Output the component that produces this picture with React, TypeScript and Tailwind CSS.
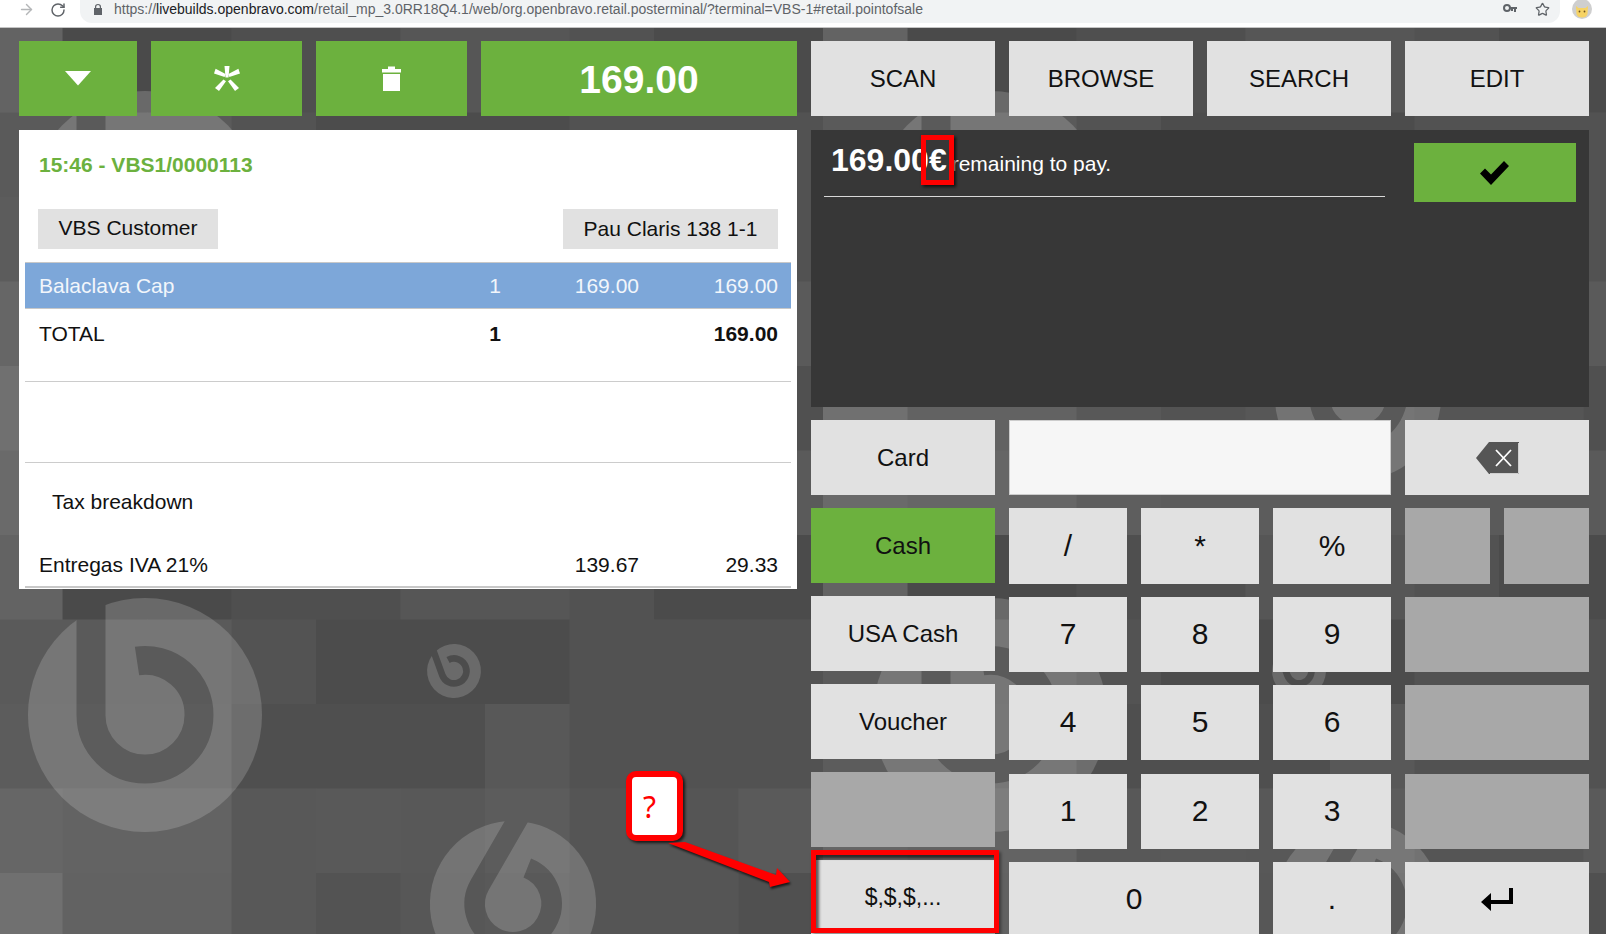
import type { ReactNode } from "react";
import { ArrowRight, RotateCw, Star } from "lucide-react";

const TILES = [
  ["#636363", "#4a4a4a", "#4a4a4a", "#4f4f4f", "#4f4f4f", "#565656", "#565656", "#525252", "#4b4b4b", "#4b4b4b"],
  ["#5a5a5a", "#5a5a5a", "#5a5a5a", "#535353", "#4c4c4c", "#4c4c4c", "#4c4c4c", "#525252", "#525252", "#525252"],
  ["#5c5c5c", "#5c5c5c", "#5c5c5c", "#4f4f4f", "#4f4f4f", "#4f4f4f", "#585858", "#525252", "#525252", "#525252"],
  ["#666666", "#636363", "#636363", "#585858", "#595959", "#585858", "#5c5c5c", "#555555", "#555555", "#5a5a5a"],
  ["#707070", "#626262", "#626262", "#585858", "#535353", "#575757", "#595959", "#555555", "#555555", "#505050"],
  ["#6a6a6a", "#666666", "#666666", "#5e5e5e", "#5c5c5c", "#5c5c5c", "#5a5a5a", "#5a5a5a", "#5a5a5a", "#5a5a5a"],
];

function Background() {
  return (
    <svg className="absolute left-0 top-0" width="1606" height="906">
      <defs>
        <mask id="logoMask" maskUnits="userSpaceOnUse" x="-130" y="-130" width="260" height="260">
          <rect x="-130" y="-130" width="260" height="260" fill="#fff" />
          <path
            d="M-54 -130 L-54 0 A54 54 0 0 0 54 0 A54 54 0 0 0 -8 -54"
            fill="none"
            stroke="#000"
            strokeWidth="29"
          />
        </mask>
        <g id="logo">
          <circle r="117" fill="#fff" fillOpacity="0.17" mask="url(#logoMask)" />
        </g>
        <pattern id="tiles" x="-22" y="0" width="845" height="507" patternUnits="userSpaceOnUse">
          {TILES.map((row, r) =>
            row.map((c, i) => (
              <rect key={`${r}-${i}`} x={i * 84.5} y={r * 84.5} width="85" height="85" fill={c} />
            ))
          )}
          <use href="#logo" transform="translate(167 180)" />
          <use href="#logo" transform="translate(476 136) rotate(-20) scale(0.23)" />
          <use href="#logo" transform="translate(535 369) rotate(30) scale(0.71)" />
        </pattern>
      </defs>
      <rect width="1606" height="906" fill="url(#tiles)" />
    </svg>
  );
}

function ChromeBar() {
  return (
    <div className="h-[28px] bg-white border-b border-[#c4c4c4] flex items-start overflow-hidden">
      <div className="w-[80px] h-[19px] flex items-center shrink-0">
        <ArrowRight className="ml-[18px] text-[#b4b6b8]" size={17} strokeWidth={2} />
        <RotateCw className="ml-[15px] text-[#5f6368]" size={16} strokeWidth={2.2} />
      </div>
      <div className="w-[1480px] h-[23px] bg-[#f1f3f4] rounded-br-[12px] rounded-bl-[12px] flex items-center pb-[5px] pl-[14px] text-[14px] text-[#5f6368] whitespace-nowrap">
        <svg className="mr-[12px]" width="8" height="11" viewBox="0 0 8 11" fill="#5f6368">
          <path d="M1 4V2.800a3 2.800 0 0 1 6 0V4h1v7H0V4zm1.200 0h3.600V2.800a1.800 1.700 0 0 0-3.600 0z" />
        </svg>
        <span>
          https://<span className="text-[#202124]">livebuilds.openbravo.com</span>
          /retail_mp_3.0RR18Q4.1/web/org.openbravo.retail.posterminal/?terminal=VBS-1#retail.pointofsale
        </span>
        <div className="ml-auto flex items-center mr-[10px] gap-[18px]">
          <svg width="14" height="10" viewBox="0 0 14 10" fill="#5f6368">
            <circle cx="4" cy="4" r="3" fill="none" stroke="#5f6368" strokeWidth="2" />
            <path d="M7 3h7v2h-1v3h-2V5h-1v2H8V5H7z" />
          </svg>
          <Star className="text-[#5f6368]" size={15} strokeWidth={2} />
        </div>
      </div>
      <svg className="ml-[12px] shrink-0 -mt-[1px]" width="20" height="20" viewBox="0 0 20 20">
        <circle cx="10" cy="10" r="10" fill="#cfcfcf" />
        <path d="M4 7l2.500 2h7L16 7l-.5 8q-1 3.500-5.500 3.500T4.500 15z" fill="#f6d365" />
        <circle cx="7.500" cy="12.500" r="0.900" fill="#6b4f1d" />
        <circle cx="12.500" cy="12.500" r="0.900" fill="#6b4f1d" />
      </svg>
    </div>
  );
}

function Key({ children, className = "" }: { children?: ReactNode; className?: string }) {
  return (
    <div className={`flex items-center justify-center bg-[#e1e1e1] text-[#111] ${className}`}>{children}</div>
  );
}

function TopLeft() {
  return (
    <div className="flex gap-[14px] h-[75px]">
      <div className="w-[118px] bg-[#6cb13e] flex items-center justify-center">
        <svg width="26" height="15" viewBox="0 0 26 15">
          <polygon points="0,0 26,0 13,14.500" fill="#fff" />
        </svg>
      </div>
      <div className="w-[151px] bg-[#6cb13e] flex items-center justify-center">
        <svg width="26" height="25" viewBox="0 0 26 25" fill="#fff">
          <path d="M10.500 0h5l-1 11.500h-3z" />
          <path d="M0 7.500l1.600-4.700 10 5.200-1 3z" />
          <path d="M26 7.500l-1.600-4.700-10 5.200 1 3z" />
          <path d="M5 25l-4-3 8.500-8.500 2.500 1.800z" />
          <path d="M21 25l4-3-8.500-8.500-2.500 1.800z" />
        </svg>
      </div>
      <div className="w-[151px] bg-[#6cb13e] flex items-center justify-center">
        <svg width="19" height="25" viewBox="0 0 19 25" fill="#fff">
          <path d="M0 3h6V0.500h7V3h6v3.500H0z" />
          <path d="M1 8h17v17H1z" />
        </svg>
      </div>
      <div className="flex-1 bg-[#6cb13e] flex items-center justify-center pt-[3px] text-white font-bold text-[39px]">
        169.00
      </div>
    </div>
  );
}

function ReceiptRow({
  a,
  b,
  c,
  d,
  className = "",
  bold = false,
}: {
  a: string;
  b?: string;
  c?: string;
  d: string;
  className?: string;
  bold?: boolean;
}) {
  return (
    <div className={`flex items-center pl-[14px] pr-[13px] text-[21px] ${className}`}>
      <span className="w-[425px]">{a}</span>
      <span className={`w-[62px] text-center ${bold ? "font-bold" : ""}`}>{b}</span>
      <span className="w-[113px] text-right">{c}</span>
      <span className={`flex-1 text-right ${bold ? "font-bold" : ""}`}>{d}</span>
    </div>
  );
}

function Receipt() {
  return (
    <div className="mt-[14px] h-[459px] bg-white px-[6px] text-[#111]">
      <div className="h-[79px] pl-[14px] pt-[23px] text-[#6cb13e] font-bold text-[21px] leading-[24px]">
        15:46 - VBS1/0000113
      </div>
      <div className="flex justify-between h-[40px] pl-[13px] pr-[13px] text-[21px]">
        <div className="w-[180px] bg-[#e1e1e1] flex items-center justify-center pb-[2px]">VBS Customer</div>
        <div className="w-[215px] bg-[#e1e1e1] flex items-center justify-center">Pau Claris 138 1-1</div>
      </div>
      <div className="mt-[13px] h-[47px] border-y border-[#c8c8c8] bg-[#7da7d9]">
        <ReceiptRow a="Balaclava Cap" b="1" c="169.00" d="169.00" className="h-full text-[#f2f6fb]" />
      </div>
      <ReceiptRow a="TOTAL" b="1" d="169.00" bold className="h-[50px]" />
      <div className="mt-[22px] h-[81px] border-t border-[#cccccc]" />
      <div className="h-[79px] border-t border-[#cccccc] pl-[27px] flex items-center text-[21px]">Tax breakdown</div>
      <ReceiptRow a="Entregas IVA 21%" c="139.67" d="29.33" className="h-[45px] pt-[2px]" />
      <div className="h-[2px] bg-[#c8c8c8]" />
    </div>
  );
}

function TopRight() {
  return (
    <div className="grid grid-cols-4 gap-[14px] h-[75px]">
      <Key className="text-[24px]">SCAN</Key>
      <Key className="text-[24px]">BROWSE</Key>
      <Key className="text-[24px]">SEARCH</Key>
      <Key className="text-[24px]">EDIT</Key>
    </div>
  );
}

function PayPanel() {
  return (
    <div className="mt-[14px] h-[277px] bg-[#373737] flex items-start pt-[13px] pl-[13px] pr-[13px] text-white">
      <div className="w-[561px] h-[54px] border-b border-[#d8d8d8] pl-[7px] pt-[2px] whitespace-nowrap leading-[30px]">
        <span className="font-bold text-[32px]">169.00€</span>
        <span className="text-[21px] ml-[5px]">remaining to pay.</span>
      </div>
      <div className="ml-auto w-[162px] h-[59px] bg-[#6cb13e] flex items-center justify-center pr-[2px]">
        <svg width="29" height="24" viewBox="0 0 29 24">
          <polygon points="0,12.500 5,7.500 11,13.500 24,0 29,5 11,24" fill="#000" />
        </svg>
      </div>
    </div>
  );
}

function Keypad() {
  const cls = "text-[30px] pb-[2px]";
  return (
    <div className="mt-[13px] flex gap-[14px]">
      <div className="w-[184px] flex flex-col gap-[13px] shrink-0">
        <Key className="h-[75px] text-[24px]">Card</Key>
        <Key className="h-[75px] text-[24px] !bg-[#6cb13e]">Cash</Key>
        <Key className="h-[75px] text-[24px]">USA Cash</Key>
        <Key className="h-[75px] text-[24px]">Voucher</Key>
        <div className="h-[75px] bg-[#a8a8a8]" />
        <Key className="h-[75px] text-[23px]">$,$,$,...</Key>
      </div>
      <div className="flex-1 grid grid-cols-[118px_118px_118px_85px_85px] grid-rows-[75px_76px_75px_75px_76px_75px] gap-x-[14px] gap-y-[13px]">
        <div className="col-span-3 bg-[#f6f6f6] border border-[#cccccc]" />
        <Key className="col-span-2">
          <svg width="43" height="32" viewBox="0 0 43 32">
            <path d="M43 0H13L0 16l13 16h30z" fill="#555555" />
            <path d="M42.500 1v30.500H14" fill="none" stroke="#cfcfcf" strokeWidth="1" />
            <path d="M20 8l15 16M35 8L20 24" stroke="#fff" strokeWidth="1.800" />
          </svg>
        </Key>
        <Key className={cls}>/</Key>
        <Key className={cls}>*</Key>
        <Key className={cls}>%</Key>
        <div className="bg-[#a8a8a8]" />
        <div className="bg-[#a8a8a8]" />
        <Key className={cls}>7</Key>
        <Key className={cls}>8</Key>
        <Key className={cls}>9</Key>
        <div className="col-span-2 bg-[#a8a8a8]" />
        <Key className={cls}>4</Key>
        <Key className={cls}>5</Key>
        <Key className={cls}>6</Key>
        <div className="col-span-2 bg-[#a8a8a8]" />
        <Key className={`${cls} mt-px`}>1</Key>
        <Key className={`${cls} mt-px`}>2</Key>
        <Key className={`${cls} mt-px`}>3</Key>
        <div className="col-span-2 bg-[#a8a8a8] mt-px" />
        <Key className={`${cls} col-span-2`}>0</Key>
        <Key className={cls}>.</Key>
        <Key className="col-span-2">
          <svg width="32" height="24" viewBox="0 0 32 24" fill="#000">
            <path d="M28 0h4v16H10v7L0 14l10-9v7h18z" />
          </svg>
        </Key>
      </div>
    </div>
  );
}

function Annotations() {
  return (
    <>
      <div className="absolute left-[921px] top-[135px] w-[33px] h-[50px] border-[5px] border-[#ff0000] shadow-[2px_2px_3px_rgba(0,0,0,0.7)]" />
      <div className="absolute left-[811px] top-[850px] w-[188px] h-[83px] border-[5px] border-[#ff0000] shadow-[inset_3px_3px_3px_rgba(0,0,0,0.6),2px_2px_3px_rgba(0,0,0,0.4)]" />
      <div className="absolute left-[626px] top-[771px] w-[57px] h-[70px] rounded-[10px] border-[6px] border-[#ff0000] bg-white shadow-[2px_2px_3px_rgba(0,0,0,0.7)] flex items-center pl-[11px] text-[#ff0000] text-[30px] font-['Noto_Sans',sans-serif]">
        ?
      </div>
      <svg className="absolute left-[660px] top-[835px]" width="140" height="60">
        <polygon
          points="8,8 25,7 116,40 117,33 130,47 110,52 109,47"
          fill="#ff0000"
          style={{ filter: "drop-shadow(1px 2px 1px rgba(0,0,0,0.7))" }}
        />
      </svg>
    </>
  );
}

export default function App() {
  return (
    <div className="relative w-[1606px] h-[934px] overflow-hidden font-['Liberation_Sans',Arial,sans-serif]">
      <ChromeBar />
      <div className="relative h-[906px] overflow-hidden">
        <Background />
        <div className="relative flex gap-[14px] pl-[19px] pt-[13px]">
          <div className="w-[778px] shrink-0">
            <TopLeft />
            <Receipt />
          </div>
          <div className="w-[778px] shrink-0">
            <TopRight />
            <PayPanel />
            <Keypad />
          </div>
        </div>
      </div>
      <Annotations />
    </div>
  );
}
